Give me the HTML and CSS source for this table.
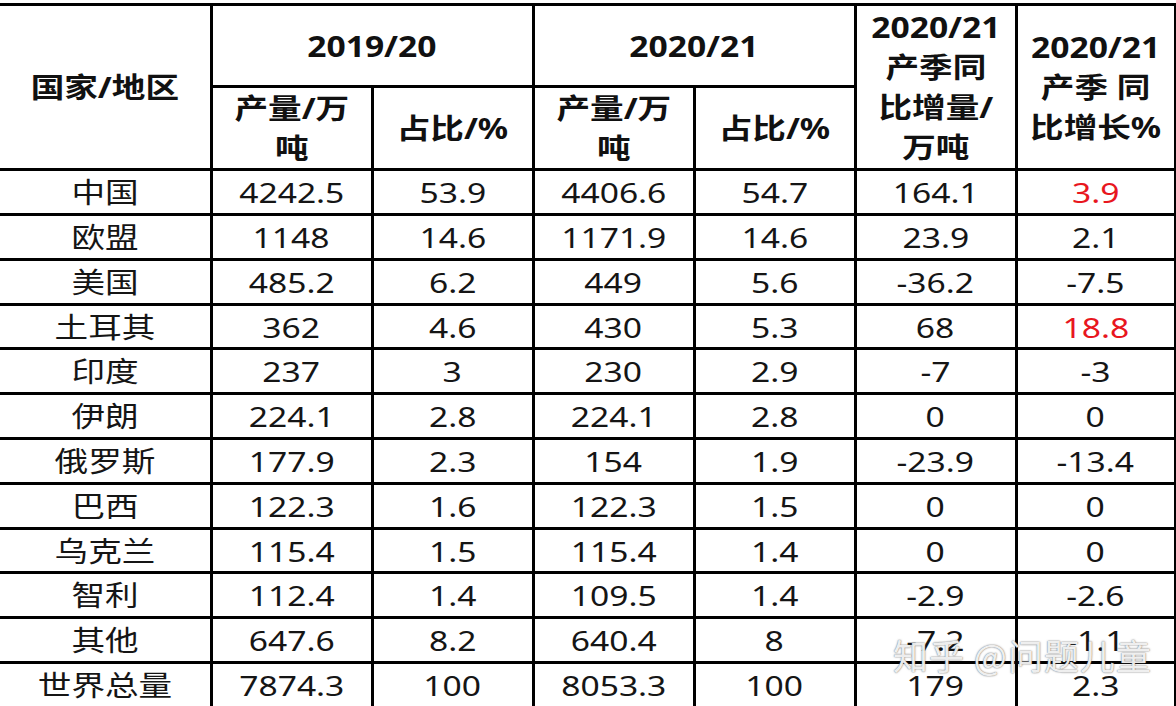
FILE: index.html
```html
<!DOCTYPE html>
<html lang="zh-CN">
<head>
<meta charset="utf-8">
<title>棉花产量</title>
<link rel="stylesheet" href="styles.css">
</head>
<body>
<div class="page">
<table class="grid">
<colgroup>
<col class="c-region"><col class="c-num"><col class="c-num"><col class="c-num"><col class="c-num"><col class="c-num"><col class="c-last">
</colgroup>
<thead>
<tr class="h1">
<th rowspan="2" class="region"><span class="t">国家/地区</span></th>
<th colspan="2"><span class="t">2019/20</span></th>
<th colspan="2"><span class="t">2020/21</span></th>
<th rowspan="2"><span class="t">2020/21<br>产季同<br>比增量/<br>万吨</span></th>
<th rowspan="2"><span class="t">2020/21<br>产季 同<br>比增长%</span></th>
</tr>
<tr class="h2">
<th><span class="t">产量/万<br>吨</span></th>
<th><span class="t">占比/%</span></th>
<th><span class="t">产量/万<br>吨</span></th>
<th><span class="t">占比/%</span></th>
</tr>
</thead>
<tbody>
<tr class="r45"><td class="region"><span class="t">中国</span></td><td><span class="t">4242.5</span></td><td><span class="t">53.9</span></td><td><span class="t">4406.6</span></td><td><span class="t">54.7</span></td><td><span class="t">164.1</span></td><td class="red"><span class="t">3.9</span></td></tr>
<tr class="r45"><td class="region"><span class="t">欧盟</span></td><td><span class="t">1148</span></td><td><span class="t">14.6</span></td><td><span class="t">1171.9</span></td><td><span class="t">14.6</span></td><td><span class="t">23.9</span></td><td><span class="t">2.1</span></td></tr>
<tr class="r45"><td class="region"><span class="t">美国</span></td><td><span class="t">485.2</span></td><td><span class="t">6.2</span></td><td><span class="t">449</span></td><td><span class="t">5.6</span></td><td><span class="t">-36.2</span></td><td><span class="t">-7.5</span></td></tr>
<tr class="r44"><td class="region"><span class="t">土耳其</span></td><td><span class="t">362</span></td><td><span class="t">4.6</span></td><td><span class="t">430</span></td><td><span class="t">5.3</span></td><td><span class="t">68</span></td><td class="red"><span class="t">18.8</span></td></tr>
<tr class="r45"><td class="region"><span class="t">印度</span></td><td><span class="t">237</span></td><td><span class="t">3</span></td><td><span class="t">230</span></td><td><span class="t">2.9</span></td><td><span class="t">-7</span></td><td><span class="t">-3</span></td></tr>
<tr class="r45"><td class="region"><span class="t">伊朗</span></td><td><span class="t">224.1</span></td><td><span class="t">2.8</span></td><td><span class="t">224.1</span></td><td><span class="t">2.8</span></td><td><span class="t">0</span></td><td><span class="t">0</span></td></tr>
<tr class="r45"><td class="region"><span class="t">俄罗斯</span></td><td><span class="t">177.9</span></td><td><span class="t">2.3</span></td><td><span class="t">154</span></td><td><span class="t">1.9</span></td><td><span class="t">-23.9</span></td><td><span class="t">-13.4</span></td></tr>
<tr class="r45"><td class="region"><span class="t">巴西</span></td><td><span class="t">122.3</span></td><td><span class="t">1.6</span></td><td><span class="t">122.3</span></td><td><span class="t">1.5</span></td><td><span class="t">0</span></td><td><span class="t">0</span></td></tr>
<tr class="r44"><td class="region"><span class="t">乌克兰</span></td><td><span class="t">115.4</span></td><td><span class="t">1.5</span></td><td><span class="t">115.4</span></td><td><span class="t">1.4</span></td><td><span class="t">0</span></td><td><span class="t">0</span></td></tr>
<tr class="r45"><td class="region"><span class="t">智利</span></td><td><span class="t">112.4</span></td><td><span class="t">1.4</span></td><td><span class="t">109.5</span></td><td><span class="t">1.4</span></td><td><span class="t">-2.9</span></td><td><span class="t">-2.6</span></td></tr>
<tr class="r45"><td class="region"><span class="t">其他</span></td><td><span class="t">647.6</span></td><td><span class="t">8.2</span></td><td><span class="t">640.4</span></td><td><span class="t">8</span></td><td><span class="t">-7.2</span></td><td><span class="t">-1.1</span></td></tr>
<tr class="r45"><td class="region"><span class="t">世界总量</span></td><td><span class="t">7874.3</span></td><td><span class="t">100</span></td><td><span class="t">8053.3</span></td><td><span class="t">100</span></td><td><span class="t">179</span></td><td><span class="t">2.3</span></td></tr>
</tbody>
</table>
<div class="watermark">知乎 @问题儿童</div>
</div>
</body>
</html>
```

FILE: styles.css
```css
html, body {
  margin: 0;
  padding: 0;
  background: #ffffff;
  overflow: hidden;
}

.page {
  position: relative;
  width: 1176px;
  height: 706px;
  overflow: hidden;
  padding-top: 3px;
  box-sizing: border-box;
}

.grid {
  border-collapse: collapse;
  table-layout: fixed;
  width: 1175px;
  color: #151515;
  font-family: "Noto Sans", "Noto Sans CJK SC", sans-serif;
}

.c-region { width: 211px; }
.c-num { width: 161px; }
.c-last { width: 159px; }

.grid th,
.grid td {
  border: 3px solid #000;
  padding: 0;
  text-align: center;
  vertical-align: middle;
  overflow: hidden;
  white-space: nowrap;
}

.grid .region {
  border-left: none;
}

.grid th {
  font-weight: 700;
  font-size: 28px;
  line-height: 40px;
  color: #111;
}

.grid td {
  font-weight: 400;
  font-size: 28px;
  line-height: 36px;
}

.t {
  display: inline-block;
  transform: scaleX(1.2);
}

.h1 { height: 82px; }
.h2 { height: 82px; }
.r45 { height: 45px; }
.r44 { height: 44px; }

.grid td.red { color: #e8161e; }

.watermark {
  position: absolute;
  left: 893px;
  top: 630px;
  font-family: "Noto Sans CJK SC", sans-serif;
  font-size: 35px;
  line-height: 50px;
  color: rgba(255, 255, 255, 0.9);
  text-shadow: 0 0 2px rgba(90, 90, 90, 0.7), 0 0 1px rgba(90, 90, 90, 0.6);
  letter-spacing: 1px;
  white-space: nowrap;
}
```
